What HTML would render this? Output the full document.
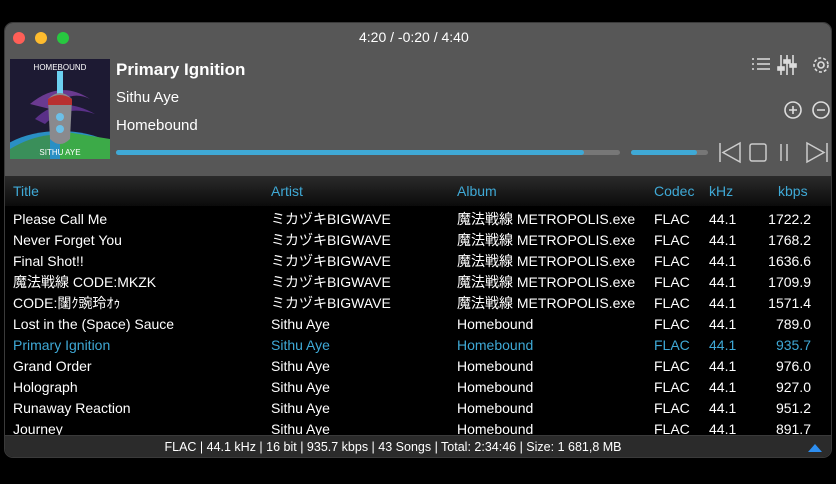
<!DOCTYPE html><html><head><meta charset="utf-8"><style>
*{margin:0;padding:0;box-sizing:border-box}
body{width:836px;height:484px;background:#000;font-family:"Liberation Sans","Noto Sans CJK JP",sans-serif;position:relative;overflow:hidden}
.win{position:absolute;left:4px;top:22px;width:828px;height:436px;border-radius:9px;background:#000;overflow:hidden;border:1px solid #3a3a3a}
.top{position:absolute;left:0;top:0;width:828px;height:153px;background:#575757}
.dot{position:absolute;top:9px;width:12px;height:12px;border-radius:50%}
.t{position:absolute;color:#fff;white-space:nowrap}
.hdr{position:absolute;left:0;top:153px;width:828px;height:30px;background:linear-gradient(#2b2b2b,#0b0b0b)}
.h{position:absolute;top:160px;color:#3fa9d6;font-size:14px;line-height:17px}
.r{position:absolute;color:#fff;font-size:14px;line-height:17px;height:17px;white-space:nowrap}
.b{color:#3fa9d6}
.foot{position:absolute;left:0;top:412px;width:828px;height:24px;background:#2b2b2b;border-top:1px solid #3a3a3a;color:#fff;font-size:12.5px;text-align:center;line-height:22px;padding-right:52px}
</style></head><body>
<div class="win">
<div class="top"></div>
<div class="dot" style="left:8px;background:#ff5f57"></div>
<div class="dot" style="left:30px;background:#febc2e"></div>
<div class="dot" style="left:52px;background:#28c840"></div>
<div class="t" style="left:354px;top:6px;font-size:14px">4:20 / -0:20 / 4:40</div>
<svg style="position:absolute;left:5px;top:36px" width="100" height="100" viewBox="0 0 100 100">
<rect width="100" height="100" fill="#1d1a33"/>
<ellipse cx="50" cy="110" rx="70" ry="38" fill="#2a8fc4"/>
<path d="M50 72 L100 80 L100 100 L50 100Z" fill="#3caa48"/>
<path d="M0 90 Q20 78 40 76 L40 100 L0 100Z" fill="#3a8f5a"/>
<path d="M20 45 Q50 20 80 40 Q60 30 40 50Z" fill="#6a3a90"/>
<path d="M25 60 Q50 35 85 55 Q55 45 35 65Z" fill="#5a3088"/>
<rect x="47" y="12" width="6" height="30" fill="#6cd0f0"/>
<path d="M38 40 Q50 28 62 40 L60 80 Q50 90 40 80Z" fill="#8a8a8e"/>
<path d="M38 40 Q50 32 62 40 L62 46 L38 46Z" fill="#b83030"/>
<circle cx="50" cy="58" r="4" fill="#6cc0e8"/><circle cx="50" cy="70" r="4" fill="#6cc0e8"/>
<text x="50" y="11" fill="#fff" font-size="8" text-anchor="middle" font-family="Liberation Sans">HOMEBOUND</text>
<text x="50" y="96" fill="#fff" font-size="8" text-anchor="middle" font-family="Liberation Sans">SITHU AYE</text>
</svg>
<div class="t" style="left:111px;top:37px;font-size:17px;font-weight:bold">Primary Ignition</div>
<div class="t" style="left:111px;top:66px;font-size:15px">Sithu Aye</div>
<div class="t" style="left:111px;top:94px;font-size:15px">Homebound</div>
<div style="position:absolute;left:111px;top:127px;width:504px;height:5px;border-radius:3px;background:#777"><div style="width:468px;height:5px;border-radius:3px;background:#3fa9d6"></div></div>
<div style="position:absolute;left:626px;top:127px;width:77px;height:5px;border-radius:3px;background:#777"><div style="width:66px;height:5px;border-radius:3px;background:#3fa9d6"></div></div>
<svg style="position:absolute;left:740px;top:30px" width="90" height="100" viewBox="0 0 90 100" fill="none" stroke="#ddd" stroke-width="1.6">
<path d="M12 6h13M12 11h13M12 16h13M7 6h2M7 11h2M7 16h2"/>
<path d="M36 2v20M42 2v20M48 2v20"/><rect x="33" y="14" width="6" height="3" fill="#ddd"/><rect x="39" y="7" width="6" height="3" fill="#ddd"/><rect x="45" y="11" width="6" height="3" fill="#ddd"/>
<circle cx="76" cy="12" r="3"/><circle cx="76" cy="12" r="7" stroke-dasharray="3 2"/>
<circle cx="48" cy="57" r="8"/><path d="M44 57h8M48 53v8"/>
<circle cx="76" cy="57" r="8"/><path d="M72 57h8"/>
</svg>
<svg style="position:absolute;left:712px;top:118px" width="114" height="24" viewBox="0 0 114 24" fill="none" stroke="#ccc" stroke-width="1.5">
<path d="M3 2v19M23 2 L6 11.5 L23 21Z"/>
<rect x="33" y="3" width="16" height="17" rx="2"/>
<path d="M64 3v17M70 3v17"/>
<path d="M90 2 L107 11.5 L90 21Z M110 2v19"/>
</svg>
<div class="hdr"></div>
<div class="h" style="left:8px">Title</div>
<div class="h" style="left:266px">Artist</div>
<div class="h" style="left:452px">Album</div>
<div class="h" style="left:649px">Codec</div>
<div class="h" style="left:704px">kHz</div>
<div class="h" style="left:773px">kbps</div>
<div id="rows"></div>
<div class="foot">FLAC | 44.1 kHz | 16 bit | 935.7 kbps | 43 Songs | Total: 2:34:46 | Size: 1 681,8 MB<span style="position:absolute;right:11px;top:8px;width:0;height:0;border-left:7px solid transparent;border-right:7px solid transparent;border-bottom:8px solid #2d8ef0"></span></div>
</div>
<script>
var d=[["Please Call Me","ミカヅキBIGWAVE","魔法戦線 METROPOLIS.exe","1722.2"],["Never Forget You","ミカヅキBIGWAVE","魔法戦線 METROPOLIS.exe","1768.2"],["Final Shot!!","ミカヅキBIGWAVE","魔法戦線 METROPOLIS.exe","1636.6"],["魔法戦線 CODE:MKZK","ミカヅキBIGWAVE","魔法戦線 METROPOLIS.exe","1709.9"],["CODE:闥ｸ豌玲ｵｩ","ミカヅキBIGWAVE","魔法戦線 METROPOLIS.exe","1571.4"],["Lost in the (Space) Sauce","Sithu Aye","Homebound","789.0"],["Primary Ignition","Sithu Aye","Homebound","935.7"],["Grand Order","Sithu Aye","Homebound","976.0"],["Holograph","Sithu Aye","Homebound","927.0"],["Runaway Reaction","Sithu Aye","Homebound","951.2"],["Journey","Sithu Aye","Homebound","891.7"]];
var h="";d.forEach(function(r,i){var y=188+i*21,c=i==6?" b":"";
h+='<div class="r'+c+'" style="left:8px;top:'+y+'px">'+r[0]+'</div><div class="r'+c+'" style="left:266px;top:'+y+'px">'+r[1]+'</div><div class="r'+c+'" style="left:452px;top:'+y+'px">'+r[2]+'</div><div class="r'+c+'" style="left:649px;top:'+y+'px">FLAC</div><div class="r'+c+'" style="left:704px;top:'+y+'px">44.1</div><div class="r'+c+'" style="right:20px;top:'+y+'px">'+r[3]+'</div>';});
document.getElementById("rows").innerHTML=h;
</script>
</body></html>
